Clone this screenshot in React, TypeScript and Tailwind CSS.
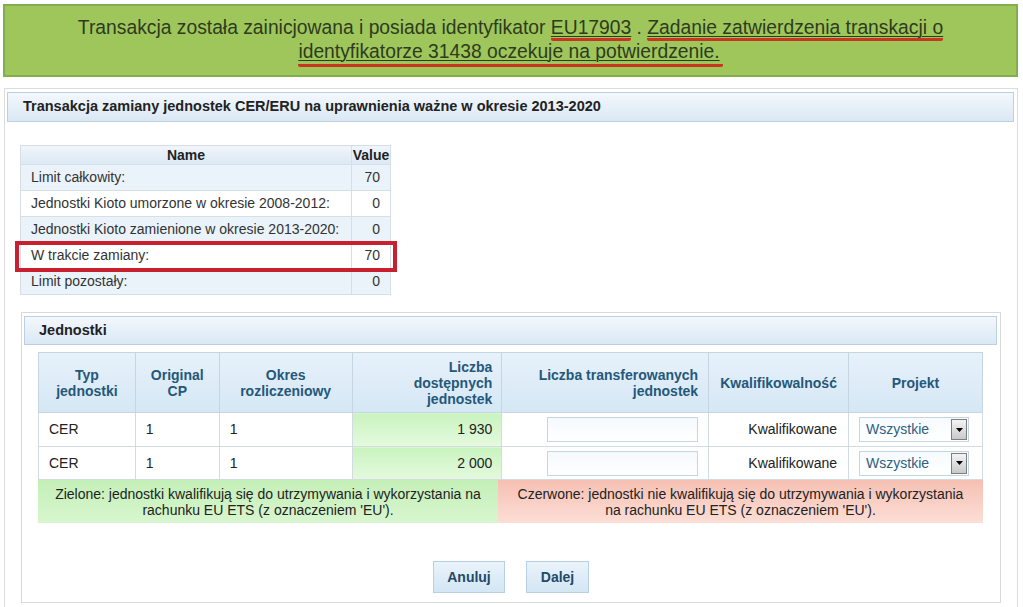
import React from 'react';

const summary = [
  { name: 'Limit całkowity:', value: '70' },
  { name: 'Jednostki Kioto umorzone w okresie 2008-2012:', value: '0' },
  { name: 'Jednostki Kioto zamienione w okresie 2013-2020:', value: '0' },
  { name: 'W trakcie zamiany:', value: '70' },
  { name: 'Limit pozostały:', value: '0' },
];

const units = [
  { typ: 'CER', cp: '1', okres: '1', dostepne: '1 930' },
  { typ: 'CER', cp: '1', okres: '1', dostepne: '2 000' },
];

const Select: React.FC = () => (
  <div className="relative w-[110px] h-[25px] border border-[#c5d6e3] bg-gradient-to-b from-[#f7fbfe] to-white flex items-center">
    <span className="pl-[6px] text-[#2b6082]">Wszystkie</span>
    <div className="absolute right-[1px] top-[1px] w-[16px] h-[21px] border border-[#7f7f7f] bg-gradient-to-b from-[#f4f4f4] to-[#c9c9c9] flex items-center justify-center">
      <svg width="7" height="4" viewBox="0 0 7 4">
        <path d="M0 0h7L3.5 4z" fill="#000" />
      </svg>
    </div>
  </div>
);

const App: React.FC = () => {
  return (
    <div className="w-[1023px] h-[607px] overflow-hidden bg-white font-['Liberation_Sans',Arial,sans-serif] text-[14px] text-[#333]">
      {/* banner */}
      <div className="mt-[4px] ml-[3px] w-[1015px] h-[73px] border-2 border-[#82ae4e] bg-[#9fc65a] flex flex-col items-center justify-center text-[19.3px] leading-[24px] text-[#2d3b1f] text-center pb-[2px]">
        <div className="whitespace-nowrap">
          Transakcja została zainicjowana i posiada identyfikator{' '}
          <span className="underline decoration-1 underline-offset-2 border-b-[3px] border-[#c9361f] rounded-[2px]">EU17903</span>{' '}
          .{' '}
          <span className="underline decoration-1 underline-offset-2 border-b-[3px] border-[#c9361f] rounded-[2px]">Zadanie zatwierdzenia transkacji o</span>
        </div>
        <div className="whitespace-nowrap">
          <span className="underline decoration-1 underline-offset-2 border-b-[3px] border-[#c9361f] pb-[2px] pr-[3px] rounded-[2px]">identyfikatorze 31438 oczekuje na potwierdzenie.</span>
        </div>
      </div>

      {/* outer panel */}
      <div className="mt-[11px] ml-[4px] w-[1014px] h-[600px] border border-[#dcdcdc] pt-[3px] pl-[2px]">
        <div className="w-[1007px] h-[30px] border border-[#bcd0e0] bg-gradient-to-b from-[#f3f8fc] to-[#dae8f5] flex items-center pl-[15px] font-bold text-[14.5px] text-[#222]">
          Transakcja zamiany jednostek CER/ERU na uprawnienia ważne w okresie 2013-2020
        </div>

        <div className="relative mt-[23px] ml-[13px] w-[371px]">
          <table className="border-collapse w-[371px]">
            <thead>
              <tr className="bg-gradient-to-b from-[#f0f5fa] to-[#dbe8f4]">
                <th className="h-[19px] w-[332px] border border-[#d6dfe8] font-bold text-[#222] text-center leading-[16px]">Name</th>
                <th className="h-[19px] w-[39px] border border-[#d6dfe8] font-bold text-[#222] text-center leading-[16px]">Value</th>
              </tr>
            </thead>
            <tbody>
              {summary.map((r, i) => (
                <tr key={r.name} className={i % 2 === 0 ? 'bg-[#eaf2fa]' : 'bg-white'}>
                  <td className="h-[26px] border border-[#d6dfe8] pl-[10px] whitespace-nowrap">{r.name}</td>
                  <td className="h-[26px] border border-[#d6dfe8] pr-[10px] text-right">{r.value}</td>
                </tr>
              ))}
            </tbody>
          </table>
          {/* annotation box */}
          <div className="absolute left-[-5px] top-[96px] w-[382px] h-[31px] border-4 border-[#c8202e] pointer-events-none" />
        </div>

        {/* Jednostki panel */}
        <div className="mt-[17px] ml-[14px] w-[980px] h-[291px] border border-[#d9d9d9] pt-[3px] pl-[2px]">
          <div className="w-[973px] h-[29px] border border-[#bcd0e0] bg-gradient-to-b from-[#f3f8fc] to-[#dae8f5] flex items-center pl-[14px] font-bold text-[14.5px] text-[#222]">
            Jednostki
          </div>

          <div className="mt-[7px] ml-[14px] w-[945px]">
            <table className="border-collapse w-[945px]">
              <thead>
                <tr className="bg-gradient-to-b from-[#e7f1fa] to-[#d5e7f5] text-[#24587a] font-bold leading-[16px]">
                  <th className="w-[97px] h-[60px] border border-[#c5d5e2] text-center">Typ<br />jednostki</th>
                  <th className="w-[84px] border border-[#c5d5e2] text-center">Original<br />CP</th>
                  <th className="w-[133px] border border-[#c5d5e2] text-center">Okres<br />rozliczeniowy</th>
                  <th className="w-[150px] border border-[#c5d5e2] text-right pr-[9px]">Liczba<br />dostępnych<br />jednostek</th>
                  <th className="w-[207px] border border-[#c5d5e2] text-right pr-[10px]">Liczba transferowanych<br />jednostek</th>
                  <th className="w-[140px] border border-[#c5d5e2] text-center">Kwalifikowalność</th>
                  <th className="w-[134px] border border-[#c5d5e2] text-center">Projekt</th>
                </tr>
              </thead>
              <tbody className="text-[#222]">
                {units.map((u, i) => (
                  <tr key={i} className={i === 0 ? 'h-[34px]' : 'h-[33px]'}>
                    <td className="border border-[#d3dbe2] pl-[10px]">{u.typ}</td>
                    <td className="border border-[#d3dbe2] pl-[10px]">{u.cp}</td>
                    <td className="border border-[#d3dbe2] pl-[10px]">{u.okres}</td>
                    <td className="border border-[#d3dbe2] pr-[9px] text-right bg-gradient-to-b from-[#c9f3bf] to-[#e4fade]">{u.dostepne}</td>
                    <td className="border border-[#d3dbe2] pr-[10px]">
                      <div className="ml-auto w-[151px] h-[25px] border border-[#c5d6e3] bg-gradient-to-b from-[#f5f9fd] to-white" />
                    </td>
                    <td className="border border-[#d3dbe2] pr-[11px] text-right">Kwalifikowane</td>
                    <td className="border border-[#d3dbe2] pl-[10px]">
                      <Select />
                    </td>
                  </tr>
                ))}
              </tbody>
            </table>
            <div className="flex h-[43px] leading-[16px] text-[#222] text-center">
              <div className="w-[460px] flex items-center justify-center bg-gradient-to-b from-[#c4efb7] to-[#d8f6cf] px-[10px]">
                Zielone: jednostki kwalifikują się do utrzymywania i wykorzystania na rachunku EU ETS (z oznaczeniem 'EU').
              </div>
              <div className="flex-1 flex items-center justify-center bg-gradient-to-b from-[#f6c0b3] to-[#fcded6] px-[12px]">
                Czerwone: jednostki nie kwalifikują się do utrzymywania i wykorzystania na rachunku EU ETS (z oznaczeniem 'EU').
              </div>
            </div>
          </div>

          <div className="mt-[38px] flex justify-center gap-[21px] pr-[2px]">
            <button className="w-[72px] h-[32px] border border-[#b9d0e2] bg-gradient-to-b from-[#eaf3fb] to-[#d3e6f4] font-bold text-[#1f4a68]">Anuluj</button>
            <button className="w-[63px] h-[32px] border border-[#b9d0e2] bg-gradient-to-b from-[#eaf3fb] to-[#d3e6f4] font-bold text-[#1f4a68]">Dalej</button>
          </div>
        </div>
      </div>
    </div>
  );
};

export default App;
